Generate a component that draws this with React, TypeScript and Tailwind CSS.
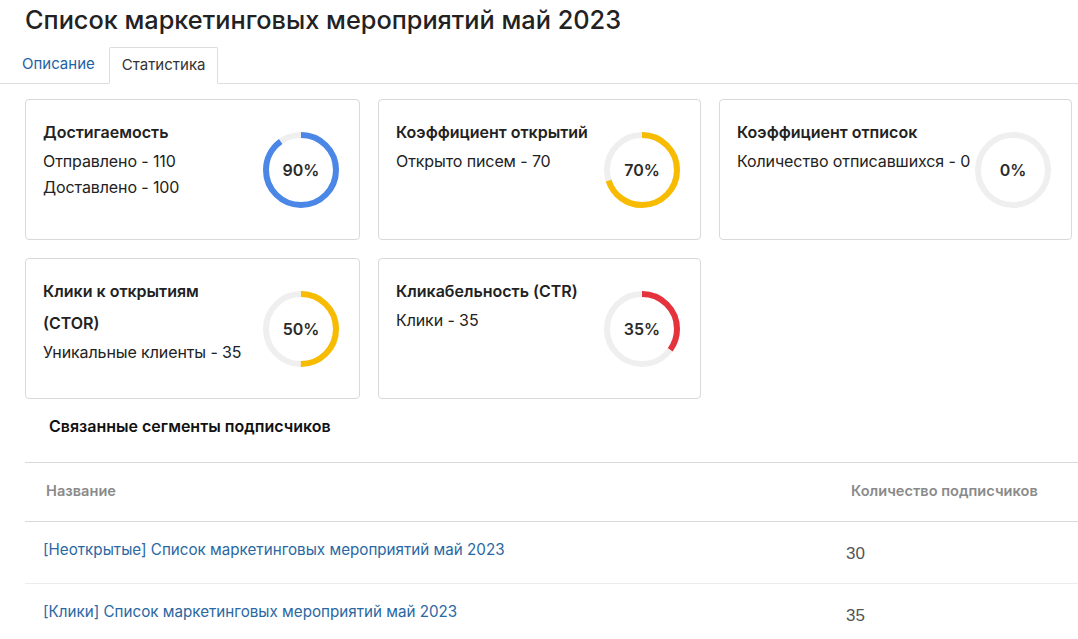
const stats = [
    {
        title: ['Достигаемость'],
        lines: ['Отправлено - 110', 'Доставлено - 100'],
        percent: 90,
        color: '#4a87e6',
    },
    {
        title: ['Коэффициент открытий'],
        lines: ['Открыто писем - 70'],
        percent: 70,
        color: '#f7bb00',
    },
    {
        title: ['Коэффициент отписок'],
        lines: ['Количество отписавшихся - 0'],
        percent: 0,
        color: '#4a87e6',
    },
    {
        title: ['Клики к открытиям', '(CTOR)'],
        lines: ['Уникальные клиенты - 35'],
        percent: 50,
        color: '#f7bb00',
    },
    {
        title: ['Кликабельность (CTR)'],
        lines: ['Клики - 35'],
        percent: 35,
        color: '#e5333d',
    },
]

const segments = [
    {name: '[Неоткрытые] Список маркетинговых мероприятий май 2023', count: 30},
    {name: '[Клики] Список маркетинговых мероприятий май 2023', count: 35},
]

const Donut = ({percent, color}: { percent: number; color: string }) => {
    const r = 35
    const len = 2 * Math.PI * r
    return (
        <div className="relative w-[76px] h-[76px] shrink-0">
            <svg width="76" height="76" viewBox="0 0 76 76" className="-rotate-90">
                <circle cx="38" cy="38" r={r} fill="none" stroke="#efefef" strokeWidth="6"/>
                {percent > 0 && (
                    <circle cx="38" cy="38" r={r} fill="none" stroke={color} strokeWidth="6"
                            style={{strokeDasharray: `${(len * percent) / 100} ${len}`}}/>
                )}
            </svg>
            <div className="absolute inset-0 flex items-center justify-center text-[16px] font-semibold text-[#2b2b2b]">
                {percent}%
            </div>
        </div>
    )
}

export default function App() {
    return (
        <div className="w-[1078px] h-[639px] overflow-hidden bg-white [font-family:'Inter',sans-serif] text-[#222]">
            <h1 className="px-[25px] pt-[2px] h-[44px] text-[25.3px] leading-[36px] font-medium text-[#222] whitespace-nowrap">
                Список маркетинговых мероприятий май 2023
            </h1>

            <div className="flex items-end pl-[8px] h-[40px] border-b border-[#dddddd]">
                <div className="px-[13px] h-[37px] flex items-center text-[15px] text-[#1d62a6] border border-transparent">
                    Описание
                </div>
                <div className="px-[12px] h-[37px] flex items-center text-[15px] text-[#333] bg-white border border-[#dddddd] border-b-white -mb-px rounded-t-[2px]">
                    Статистика
                </div>
            </div>

            <div className="grid grid-cols-[335px_323px_353px] gap-[18px] pl-[25px] pt-[15px]">
                {stats.map((s) => (
                    <div key={s.title[0]}
                         className="h-[141px] flex justify-between border border-[#d9d9d9] rounded-[4px] pl-[17px] pr-[20px]">
                        <div className="pt-[16px] whitespace-nowrap">
                            {s.title.map((t) => (
                                <div key={t} className="text-[16px] leading-[32px] font-semibold text-[#222]">{t}</div>
                            ))}
                            {s.lines.map((l) => (
                                <div key={l} className="text-[16px] leading-[26px] text-[#222] tracking-[-0.1px]">{l}</div>
                            ))}
                        </div>
                        <div className="self-center">
                            <Donut percent={s.percent} color={s.color}/>
                        </div>
                    </div>
                ))}
            </div>

            <div className="pl-[49px] pt-[15px] h-[63px] text-[16px] leading-[24px] font-semibold text-[#111]">
                Связанные сегменты подписчиков
            </div>

            <table className="ml-[25px] w-[1053px] border-collapse">
                <thead>
                <tr className="border-t border-b border-[#d9d9d9] h-[59px]">
                    <th className="w-[821px] pl-[21px] text-left text-[14.6px] font-semibold text-[#8a8a8a]">Название</th>
                    <th className="pl-[5px] text-left text-[14.6px] font-semibold text-[#8a8a8a]">Количество подписчиков</th>
                </tr>
                </thead>
                <tbody>
                {segments.map((row, i) => (
                    <tr key={row.name} className={`h-[62px] ${i === 0 ? 'border-b border-[#ececec]' : ''}`}>
                        <td className="pl-[18px] pb-[4px] text-[15.2px] text-[#2a67a3]">{row.name}</td>
                        <td className="pt-[2px] text-[17px] text-[#555] [font-family:'Liberation_Sans',sans-serif]">{row.count}</td>
                    </tr>
                ))}
                </tbody>
            </table>
        </div>
    )
}
